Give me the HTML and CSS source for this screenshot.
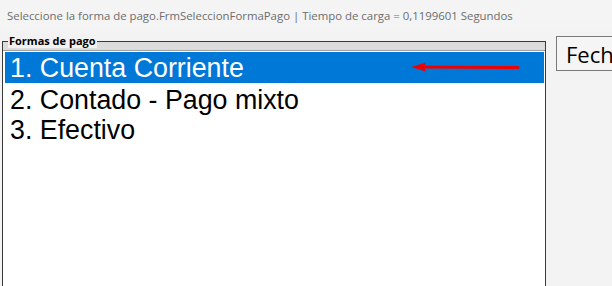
FILE: index.html
```html
<!DOCTYPE html>
<html lang="es">
<head>
    <meta charset="UTF-8">
    <meta name="viewport" content="width=device-width, initial-scale=1.0">
    <title>Seleccione la forma de pago</title>
    <link rel="stylesheet" href="styles.css">
</head>
<body>
    <div class="titlebar">Seleccione la forma de pago.FrmSeleccionFormaPago | Tiempo de carga = 0,1199601 Segundos</div>

    <div class="main">
        <div class="group">
            <span class="group-label">Formas de pago</span>
            <ul class="listbox">
                <li class="item selected">1. Cuenta Corriente</li>
                <li class="item">2. Contado - Pago mixto</li>
                <li class="item">3. Efectivo</li>
            </ul>
            <svg class="arrow" width="110" height="12" viewBox="0 0 110 12">
                <line x1="12" y1="6" x2="107" y2="6.5" stroke="#f00000" stroke-width="3" stroke-linecap="round"/>
                <polygon points="0,6 15,1.5 13,6 15,10.5" fill="#f00000"/>
            </svg>
        </div>
        <button class="side-button">Fech</button>
    </div>
</body>
</html>
```

FILE: styles.css
```css
body {
    margin: 0;
    background-color: #f3f3f3;
    font-family: "Open Sans", sans-serif;
    overflow: hidden;
    height: 286px;
}
.titlebar {
    height: 30px;
    padding-left: 7px;
    font-size: 11.4px;
    line-height: 32px;
    color: #6d6d6d;
    background-color: #f4f4f4;
    white-space: nowrap;
}
.main {
    display: flex;
    align-items: flex-start;
    gap: 10px;
    padding-top: 6px;
    padding-left: 2px;
    overflow: hidden;
}
.group {
    position: relative;
    flex-shrink: 0;
    box-sizing: border-box;
    margin-top: 5px;
    width: 544px;
    height: 245px;
    border: 1px solid #3a3a3a;
    border-bottom: none;
    background-color: #dcdcdc;
    padding-top: 8px;
}
.group-label {
    position: absolute;
    top: -8px;
    left: 5px;
    padding: 0 1px;
    font-size: 11px;
    font-weight: bold;
    line-height: 14px;
    color: #000;
    background-color: #f2f2f2;
}
.listbox {
    list-style: none;
    box-sizing: border-box;
    margin: 0;
    height: 100%;
    padding: 1px 1px 0 2px;
    border-top: 1px solid #a0a0a0;
    background-color: #fff;
}
.item {
    height: 30px;
    padding-left: 5px;
    font-family: "Liberation Sans", Arial, sans-serif;
    font-size: 26.8px;
    line-height: 34px;
    color: #000;
}
.item.selected {
    height: 31px;
    line-height: 33px;
    background-color: #0078d7;
    color: #fff;
}
.arrow {
    position: absolute;
    top: 19px;
    left: 408px;
}
.side-button {
    flex-shrink: 0;
    width: 60px;
    height: 35px;
    padding: 0 0 0 9px;
    text-align: left;
    font-family: "Open Sans", sans-serif;
    font-size: 22px;
    color: #000;
    background-color: #f5f5f5;
    border: 1px solid #7a7a7a;
    border-right: none;
}
```
